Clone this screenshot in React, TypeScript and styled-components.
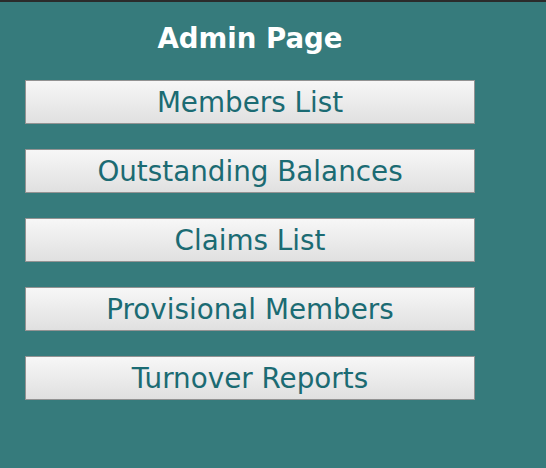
import { FunctionComponent } from 'react'
import styled, { createGlobalStyle } from 'styled-components'

const adminLinks = [
  { key: 'members', title: 'Members List' },
  { key: 'balances', title: 'Outstanding Balances' },
  { key: 'claims', title: 'Claims List' },
  { key: 'provisional', title: 'Provisional Members' },
  { key: 'turnover', title: 'Turnover Reports' }
]

const GlobalStyle = createGlobalStyle`
  html, body {
    margin: 0;
    padding: 0;
    background: #367b7c;
  }
  body {
    font-family: "DejaVu Sans", Verdana, sans-serif;
  }
`

const Page = styled.div`
  min-height: 468px;
  box-sizing: border-box;
  border-top: 2px solid #2b2b2b;
  background: #367b7c;
  padding: 21px 0 0 25px;
`

const Panel = styled.div`
  width: 450px;
  display: flex;
  flex-direction: column;
  align-items: stretch;
  gap: 25px;
`

const Title = styled.h1`
  margin: 0 0 1px;
  text-align: center;
  color: #ffffff;
  font-size: 27.6px;
  font-weight: bold;
  line-height: 31px;
`

const MenuButton = styled.button`
  height: 44px;
  box-sizing: border-box;
  border: 1px solid #939393;
  background: linear-gradient(#f7f7f7, #e0e0e0);
  color: #1b6b73;
  font-family: "DejaVu Sans", Verdana, sans-serif;
  font-size: 27.8px;
  line-height: 31px;
  padding: 0;
  cursor: pointer;
`

const AdminPage: FunctionComponent = () => {
  return (
    <Page>
      <Panel>
        <Title>Admin Page</Title>
        {adminLinks.map(link => (
          <MenuButton key={link.key}>{link.title}</MenuButton>
        ))}
      </Panel>
    </Page>
  )
}

export default function App() {
  return (
    <>
      <GlobalStyle />
      <AdminPage />
    </>
  )
}
